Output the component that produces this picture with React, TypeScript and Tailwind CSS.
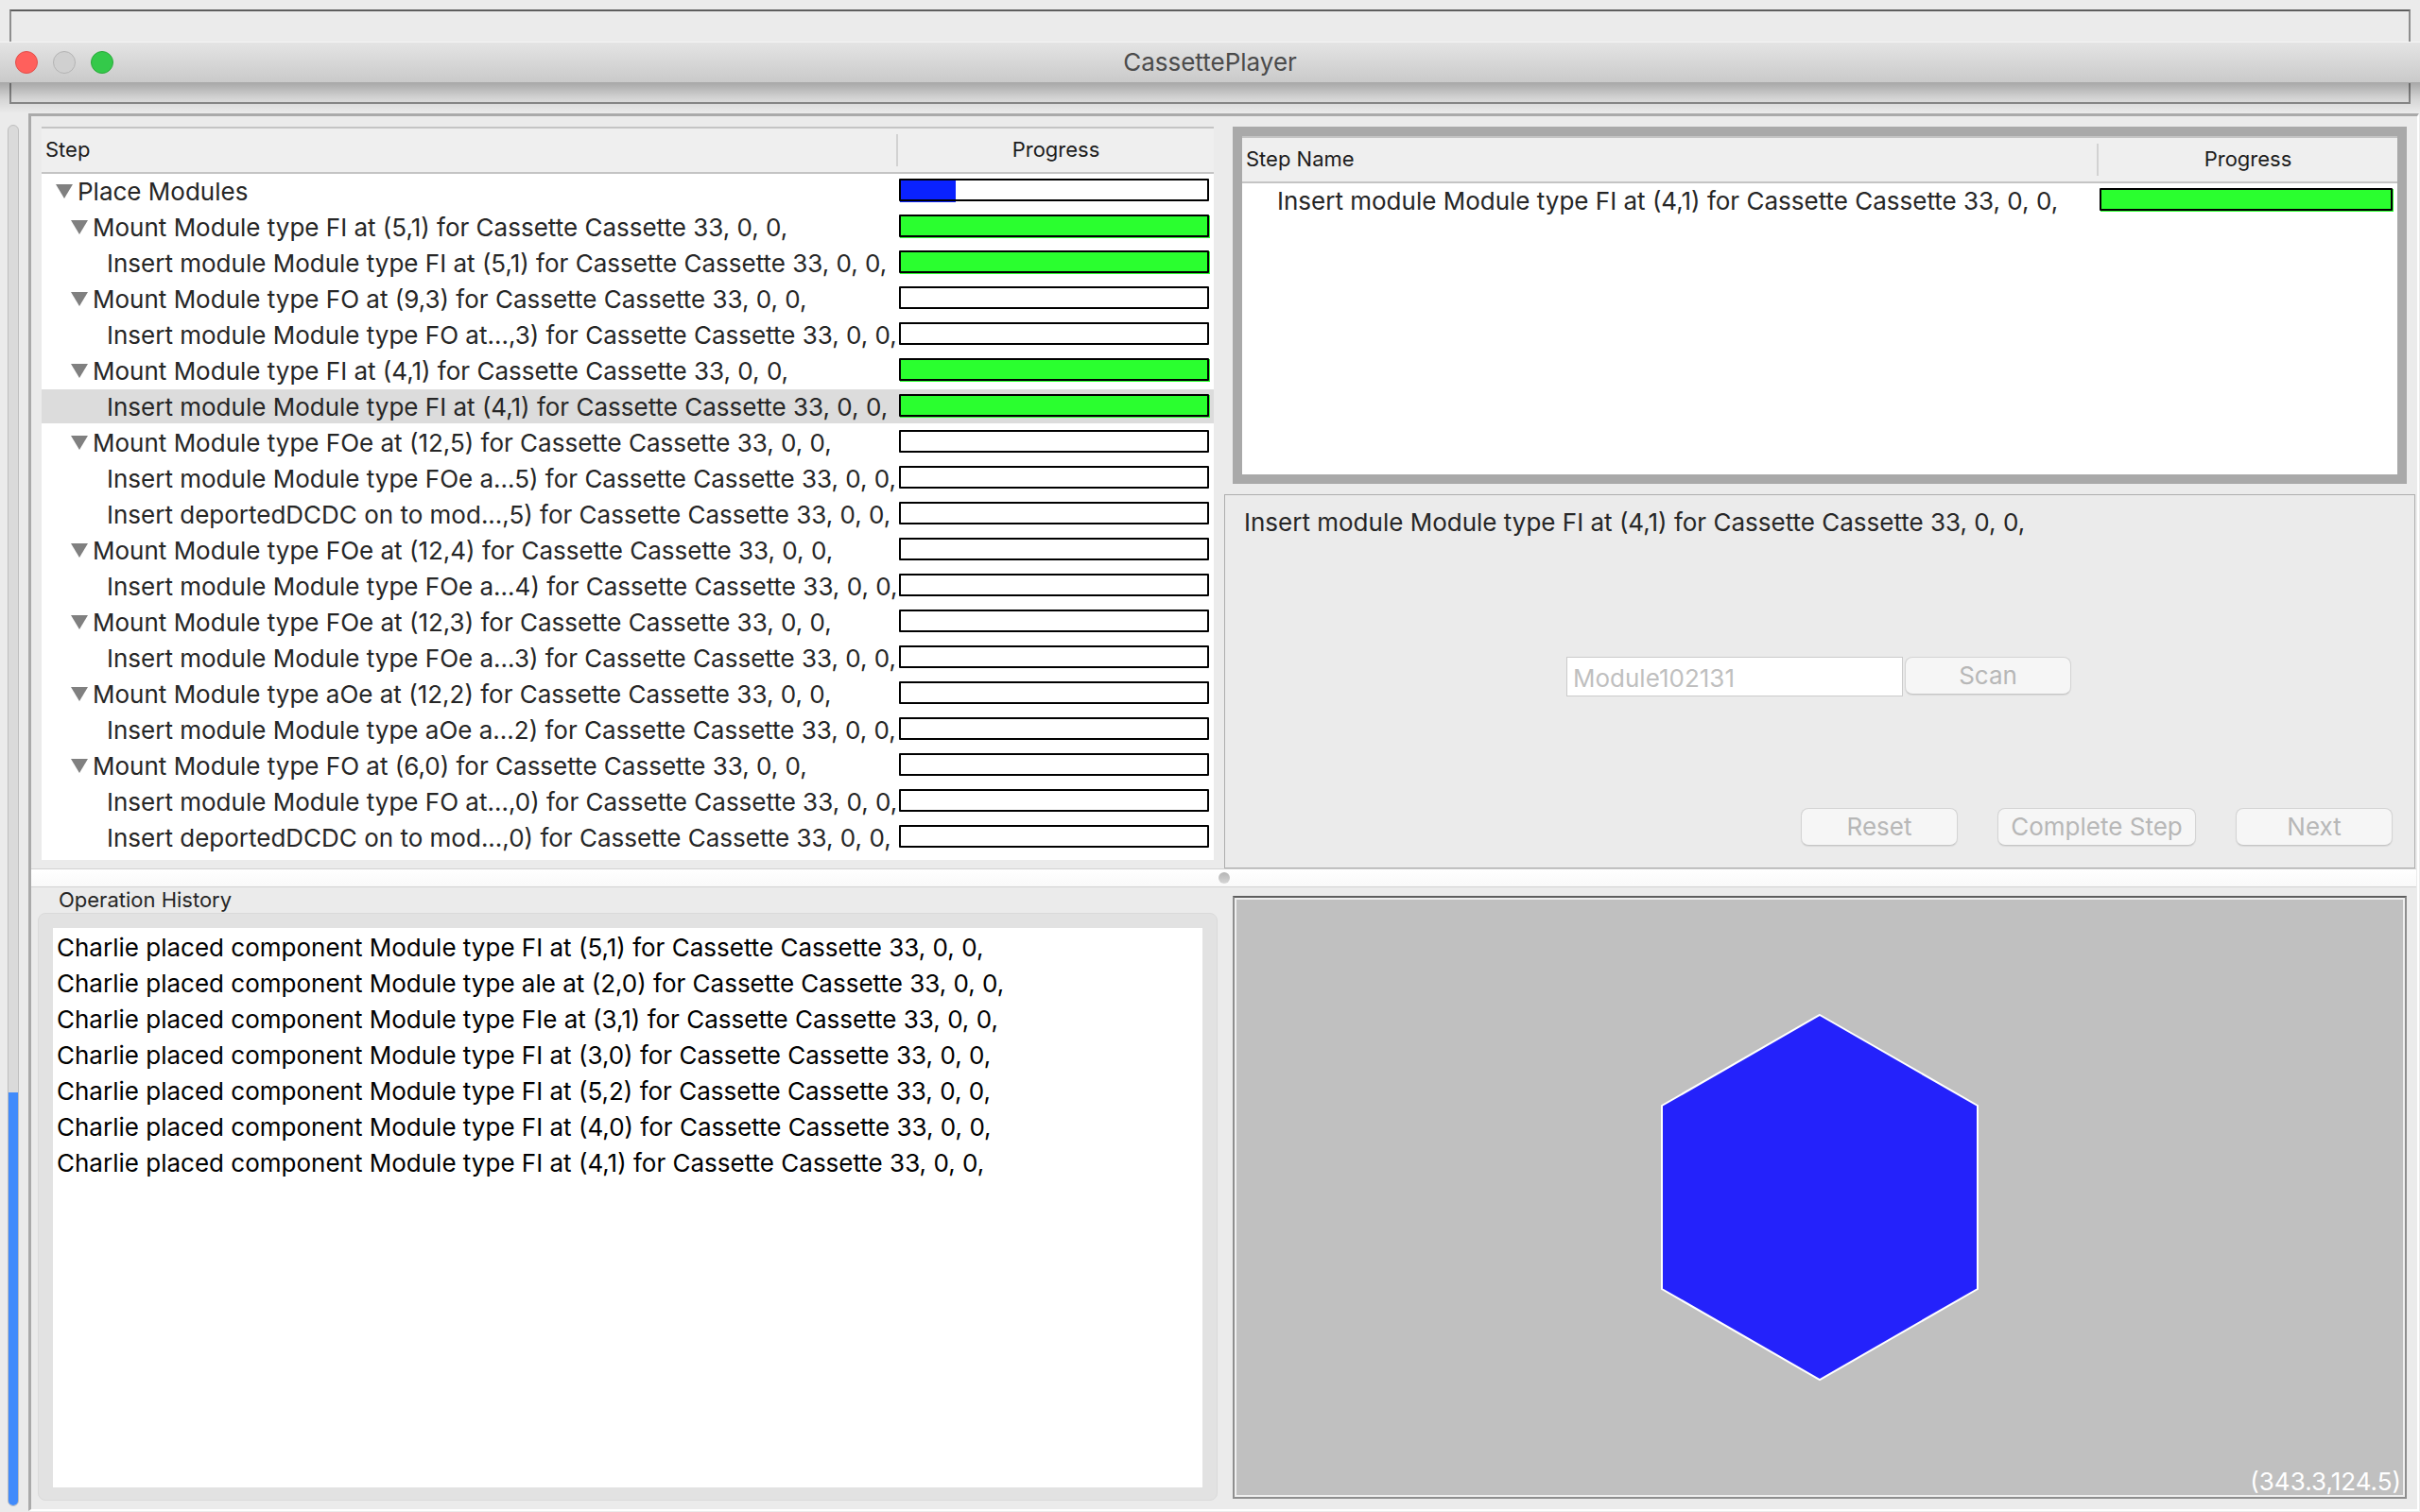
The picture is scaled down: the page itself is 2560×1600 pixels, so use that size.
import React from "react";

type Step = { label: string; level: number; progress: number; selected?: boolean };

const steps: Step[] = [
  { label: "Place Modules", level: 0, progress: 18 },
  { label: "Mount Module type FI at (5,1) for Cassette Cassette 33, 0, 0,", level: 1, progress: 100 },
  { label: "Insert module Module type FI at (5,1) for Cassette Cassette 33, 0, 0,", level: 2, progress: 100 },
  { label: "Mount Module type FO at (9,3) for Cassette Cassette 33, 0, 0,", level: 1, progress: 0 },
  { label: "Insert module Module type FO at...,3) for Cassette Cassette 33, 0, 0,", level: 2, progress: 0 },
  { label: "Mount Module type FI at (4,1) for Cassette Cassette 33, 0, 0,", level: 1, progress: 100 },
  { label: "Insert module Module type FI at (4,1) for Cassette Cassette 33, 0, 0,", level: 2, progress: 100, selected: true },
  { label: "Mount Module type FOe at (12,5) for Cassette Cassette 33, 0, 0,", level: 1, progress: 0 },
  { label: "Insert module Module type FOe a...5) for Cassette Cassette 33, 0, 0,", level: 2, progress: 0 },
  { label: "Insert deportedDCDC on to mod...,5) for Cassette Cassette 33, 0, 0,", level: 2, progress: 0 },
  { label: "Mount Module type FOe at (12,4) for Cassette Cassette 33, 0, 0,", level: 1, progress: 0 },
  { label: "Insert module Module type FOe a...4) for Cassette Cassette 33, 0, 0,", level: 2, progress: 0 },
  { label: "Mount Module type FOe at (12,3) for Cassette Cassette 33, 0, 0,", level: 1, progress: 0 },
  { label: "Insert module Module type FOe a...3) for Cassette Cassette 33, 0, 0,", level: 2, progress: 0 },
  { label: "Mount Module type aOe at (12,2) for Cassette Cassette 33, 0, 0,", level: 1, progress: 0 },
  { label: "Insert module Module type aOe a...2) for Cassette Cassette 33, 0, 0,", level: 2, progress: 0 },
  { label: "Mount Module type FO at (6,0) for Cassette Cassette 33, 0, 0,", level: 1, progress: 0 },
  { label: "Insert module Module type FO at...,0) for Cassette Cassette 33, 0, 0,", level: 2, progress: 0 },
  { label: "Insert deportedDCDC on to mod...,0) for Cassette Cassette 33, 0, 0,", level: 2, progress: 0 },
];

const history = [
  "Charlie placed component Module type FI at (5,1) for Cassette Cassette 33, 0, 0,",
  "Charlie placed component Module type ale at (2,0) for Cassette Cassette 33, 0, 0,",
  "Charlie placed component Module type FIe at (3,1) for Cassette Cassette 33, 0, 0,",
  "Charlie placed component Module type FI at (3,0) for Cassette Cassette 33, 0, 0,",
  "Charlie placed component Module type FI at (5,2) for Cassette Cassette 33, 0, 0,",
  "Charlie placed component Module type FI at (4,0) for Cassette Cassette 33, 0, 0,",
  "Charlie placed component Module type FI at (4,1) for Cassette Cassette 33, 0, 0,",
];

const indents = ["pl-[15px]", "pl-[31px]", "pl-[69px]"];

function Bar({ value }: { value: number }) {
  return (
    <div role="progressbar" aria-label="Progress" aria-valuenow={value} className="grid h-6 bg-white">
      <div
        className={`col-start-1 row-start-1 mt-px ml-px h-6 ${value === 100 ? "bg-[#2aff2f]" : "bg-[#0a22ff]"}`}
        style={{ width: `${value}%` }}
      />
      <div className="col-start-1 row-start-1 h-6 rounded-[1px] border-2 border-black" />
    </div>
  );
}

function HeadRow({ first, widthClass }: { first: string; widthClass: string }) {
  return (
    <thead>
      <tr className="h-[50px] bg-[#efefef] text-[22px] leading-7 text-[#1c1c1c]">
        <th scope="col" className="border-y-2 border-[#c4c4c4] p-0 text-left font-normal">
          <div className="flex h-[34px] items-center border-r-2 border-[#d2d2d2] pb-[2px] pl-1">{first}</div>
        </th>
        <th scope="col" className={`border-y-2 border-[#c4c4c4] p-0 pb-[2px] text-center font-normal ${widthClass}`}>
          Progress
        </th>
      </tr>
    </thead>
  );
}

function PushButton({ children, widthClass }: { children: React.ReactNode; widthClass: string }) {
  return (
    <button
      type="button"
      disabled
      className={`flex h-10 items-center justify-center rounded-lg border border-[#d4d4d4] border-b-[#c6c6c6] bg-[#f6f6f6] text-[26px] leading-8 whitespace-nowrap text-[#b7b7b7] shadow-[0_1px_1px_rgba(0,0,0,0.08)] ${widthClass}`}
    >
      {children}
    </button>
  );
}

function TitleBar() {
  return (
    <header className="grid h-[120px] shrink-0">
      <div className="col-start-1 row-start-1 mx-[10px] mt-[10px] h-[100px] border-2 border-[#8e8e8e] border-t-[#5e5e5e]" />
      <div className="col-start-1 row-start-1 mt-11 flex flex-col">
        <div className="grid h-11 grid-cols-[1fr_auto_1fr] items-center border-t border-b border-t-[#f4f4f4] border-b-[#a8a8a8] bg-linear-to-b from-[#e4e4e4] to-[#cacaca] px-4">
          <div className="flex gap-4">
            <button type="button" aria-label="Close" className="size-6 rounded-full border border-[#e2504b] bg-[#ff605c]" />
            <button type="button" aria-label="Minimize" disabled className="size-6 rounded-full border border-[#b4b4b4] bg-[#d0d0d0]" />
            <button type="button" aria-label="Zoom" className="size-6 rounded-full border border-[#2aaa3b] bg-[#34c94a]" />
          </div>
          <h1 className="text-[26px] leading-8 text-[#4b4b4b]">CassettePlayer</h1>
        </div>
        <div className="h-8 bg-linear-to-b from-black/28 via-black/10 to-transparent" />
      </div>
    </header>
  );
}

function StepTree() {
  return (
    <div className="bg-white pb-1">
      <table className="w-full border-separate border-spacing-0">
        <HeadRow first="Step" widthClass="w-[334px]" />
        <tbody>
          {steps.map((s, i) => (
            <tr key={i} className={`h-[38px] ${s.selected ? "bg-[#dcdcdc]" : ""}`}>
              <td className={`border-b-2 border-white p-0 ${indents[s.level]}`}>
                <div className="flex h-9 items-center gap-[5px] pt-px leading-[35px] whitespace-nowrap">
                  {s.level < 2 && (
                    <svg width="18" height="15" viewBox="0 0 18 15" className="shrink-0" aria-hidden="true">
                      <path d="M0 0h18L9 15z" fill="#808080" />
                    </svg>
                  )}
                  <span>{s.label}</span>
                </div>
              </td>
              <td className="border-b-2 border-white py-0 pt-[5px] pr-[5px] pl-px align-top">
                <Bar value={s.progress} />
              </td>
            </tr>
          ))}
        </tbody>
      </table>
    </div>
  );
}

function CurrentStep() {
  return (
    <div className="mr-[11px] ml-[9px] h-[378px] border-[10px] border-[#a9a9a9] bg-white">
      <table className="w-full border-separate border-spacing-0">
        <HeadRow first="Step Name" widthClass="w-[316px]" />
        <tbody>
          <tr className="h-[38px]">
            <td className="p-0 pl-[37px] leading-9 whitespace-nowrap">
              Insert module Module type FI at (4,1) for Cassette Cassette 33, 0, 0,
            </td>
            <td className="py-0 pt-[5px] pr-[5px] pl-px align-top">
              <Bar value={100} />
            </td>
          </tr>
        </tbody>
      </table>
    </div>
  );
}

function StepForm() {
  return (
    <form className="mt-[11px] mr-[2px] flex flex-1 flex-col border border-[#adadad] pb-[23px]">
      <label htmlFor="module-id" className="mt-[11px] pl-5 leading-9">
        Insert module Module type FI at (4,1) for Cassette Cassette 33, 0, 0,
      </label>
      <div className="mt-[124px] flex justify-center gap-[2px] pr-[2px]">
        <input
          id="module-id"
          type="text"
          disabled
          defaultValue="Module102131"
          className="h-[42px] w-[356px] border border-[#cbcbcb] bg-white px-[6px] pt-[2px] text-[26px] text-[#bfbfbf]"
        />
        <PushButton widthClass="w-44">Scan</PushButton>
      </div>
      <div className="mt-auto flex justify-end gap-[42px] pr-[23px]">
        <PushButton widthClass="w-[166px]">Reset</PushButton>
        <PushButton widthClass="w-[210px]">Complete Step</PushButton>
        <PushButton widthClass="w-[166px]">Next</PushButton>
      </div>
    </form>
  );
}

export default function App() {
  return (
    <div className="flex min-h-screen flex-col bg-[#ebebeb] font-['Inter',sans-serif] text-[26px] text-[#262626]">
      <TitleBar />
      <div className="flex flex-1">
        <aside className="flex w-[30px] shrink-0 pt-3 pb-[6px] pl-2">
          <div className="flex w-3 flex-col justify-end overflow-hidden rounded-full border border-[#bebebe] bg-[#dadada]">
            <div className="-mx-px -mb-px h-[30%] rounded-b-full border-x border-[#3a7ae0] bg-[#418bfb]" />
          </div>
        </aside>
        <main className="mr-px mb-px flex flex-1 flex-col border-t-3 border-r-2 border-b-2 border-l-3 border-t-[#aaaaaa] border-r-white border-b-white border-l-[#aaaaaa]">
          <div className="grid grid-cols-2">
            <div className="px-[11px] pt-[11px] pb-[9px]">
              <StepTree />
            </div>
            <div className="flex flex-col pt-[11px]">
              <CurrentStep />
              <StepForm />
            </div>
          </div>
          <div className="mr-px flex h-5 shrink-0 items-center justify-center border-y border-[#d2d2d2] bg-linear-to-b from-white to-[#f9f9f9]">
            <div className="size-3 rounded-full bg-linear-to-b from-[#b4b4b4] to-[#d6d6d6]" />
          </div>
          <div className="grid flex-1 grid-cols-2">
            <section className="flex flex-col pr-[7px] pb-[9px] pl-[7px]">
              <h2 className="pl-[22px] text-[22px] leading-[27px]">Operation History</h2>
              <div className="flex flex-1 rounded-lg border border-[#dadada] bg-[#e2e2e2] px-[15px] pt-[15px] pb-[13px]">
                <ul className="flex-1 bg-white px-1 pt-[3px] text-black">
                  {history.map((h) => (
                    <li key={h} className="h-[38px] leading-9 whitespace-nowrap">
                      {h}
                    </li>
                  ))}
                </ul>
              </div>
            </section>
            <section className="mt-[9px] mr-[11px] mb-[11px] ml-[9px] flex border-2 border-[#8e8e8e] border-t-[#5e5e5e]">
              <div className="grid flex-1 border-2 border-[#efefef] bg-[#c0c0c0]">
                <svg
                  width="338"
                  height="390"
                  viewBox="0 0 338 390"
                  className="col-start-1 row-start-1 place-self-center"
                  role="img"
                  aria-label="Module"
                >
                  <path d="M169 2L336 98V292L169 388L2 292V98Z" fill="#2422fb" stroke="#ffffff" strokeWidth="2" />
                </svg>
                <p className="col-start-1 row-start-1 self-end justify-self-end pr-[2px] leading-7 text-white">(343.3,124.5)</p>
              </div>
            </section>
          </div>
        </main>
      </div>
    </div>
  );
}
